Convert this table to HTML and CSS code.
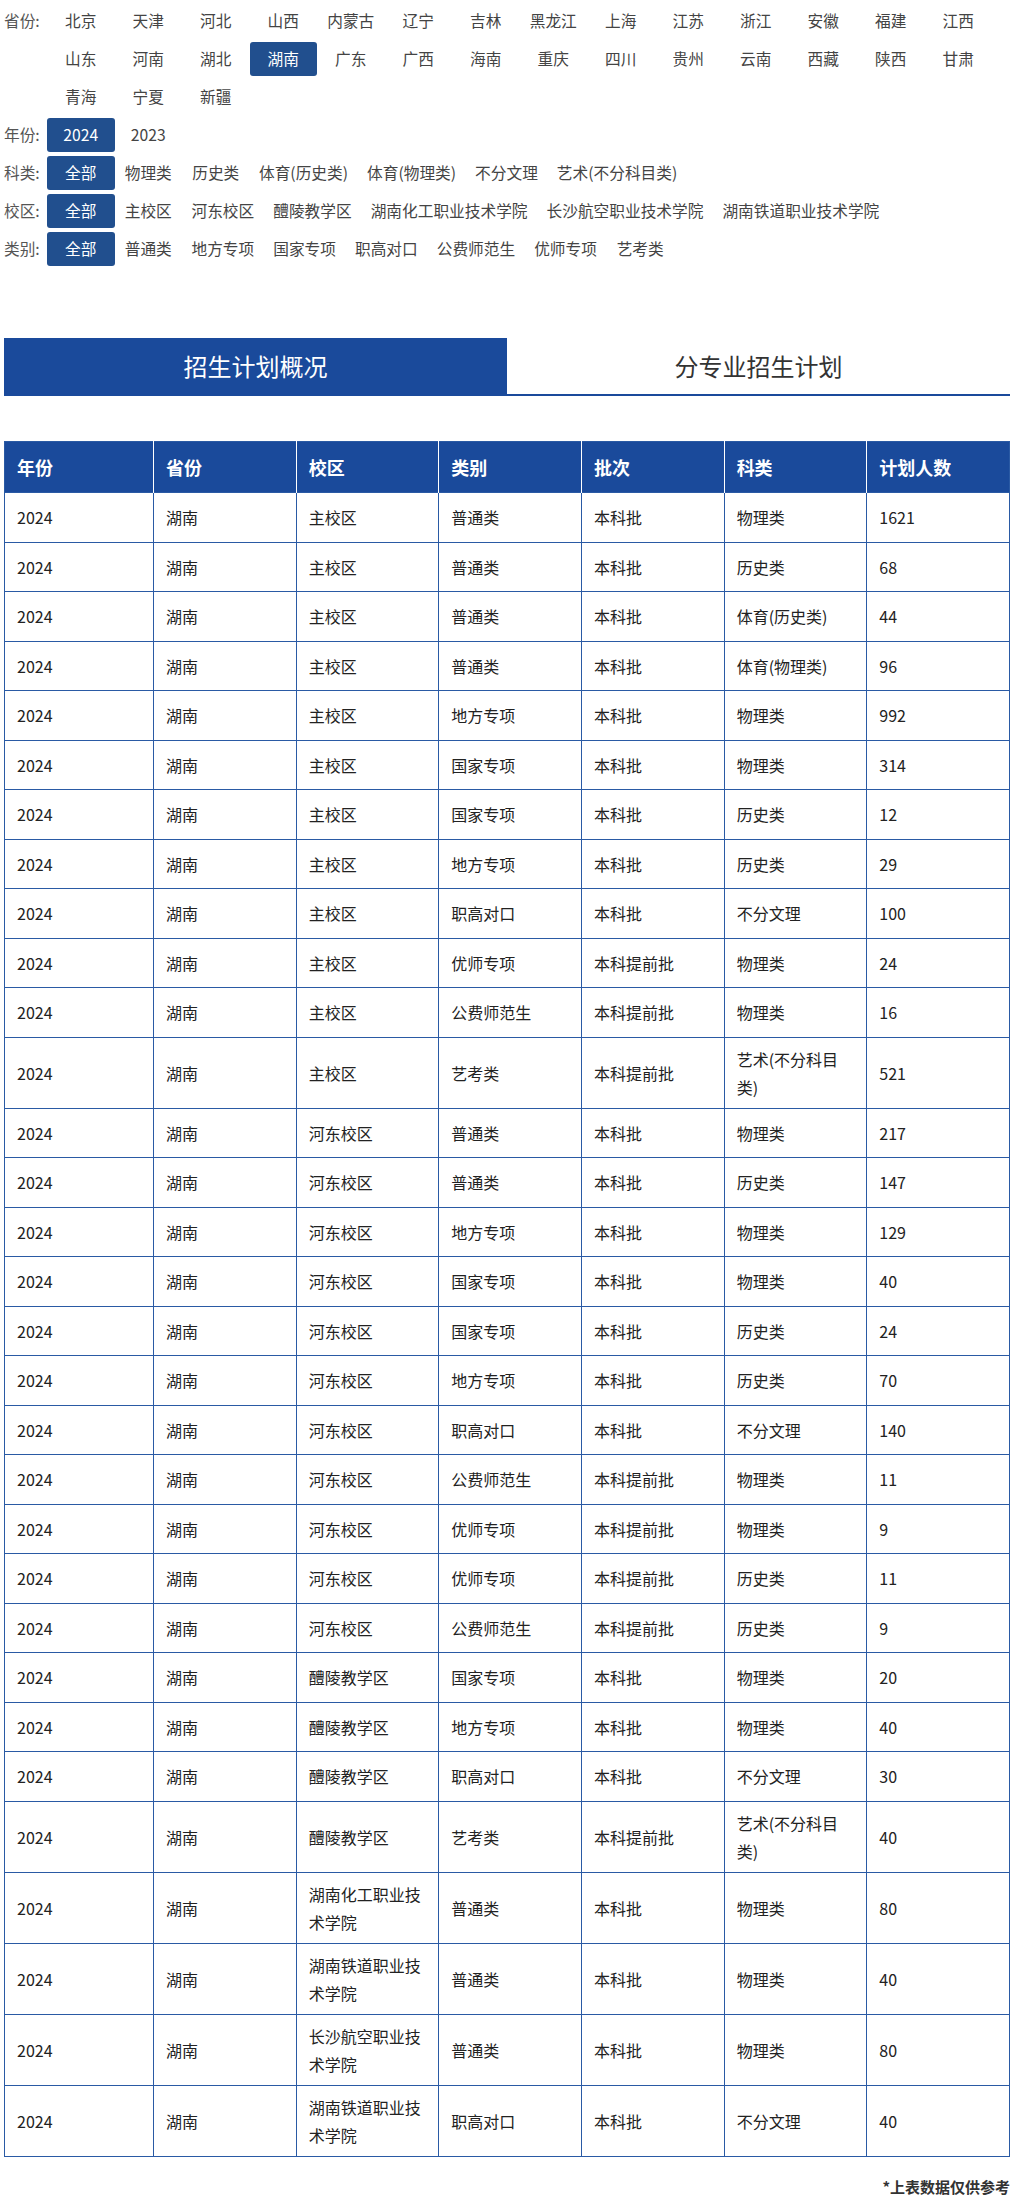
FILE: index.html
```html
<!DOCTYPE html>
<html lang="zh-CN">
<head>
<meta charset="utf-8">
<title>招生计划</title>
<link rel="stylesheet" href="styles.css">
</head>
<body>
<div class="page">
  <div class="filters">
    <div class="filter-row">
      <span class="label">省份:</span>
      <div class="items">
        <span class="item">北京</span><span class="item">天津</span><span class="item">河北</span><span class="item">山西</span><span class="item">内蒙古</span><span class="item">辽宁</span><span class="item">吉林</span><span class="item">黑龙江</span><span class="item">上海</span><span class="item">江苏</span><span class="item">浙江</span><span class="item">安徽</span><span class="item">福建</span><span class="item">江西</span>
        <span class="item">山东</span><span class="item">河南</span><span class="item">湖北</span><span class="item active">湖南</span><span class="item">广东</span><span class="item">广西</span><span class="item">海南</span><span class="item">重庆</span><span class="item">四川</span><span class="item">贵州</span><span class="item">云南</span><span class="item">西藏</span><span class="item">陕西</span><span class="item">甘肃</span>
        <span class="item">青海</span><span class="item">宁夏</span><span class="item">新疆</span>
      </div>
    </div>
    <div class="filter-row">
      <span class="label">年份:</span>
      <div class="items"><span class="item active">2024</span><span class="item">2023</span></div>
    </div>
    <div class="filter-row">
      <span class="label">科类:</span>
      <div class="items"><span class="item active">全部</span><span class="item">物理类</span><span class="item">历史类</span><span class="item">体育(历史类)</span><span class="item">体育(物理类)</span><span class="item">不分文理</span><span class="item">艺术(不分科目类)</span></div>
    </div>
    <div class="filter-row">
      <span class="label">校区:</span>
      <div class="items"><span class="item active">全部</span><span class="item">主校区</span><span class="item">河东校区</span><span class="item">醴陵教学区</span><span class="item">湖南化工职业技术学院</span><span class="item">长沙航空职业技术学院</span><span class="item">湖南铁道职业技术学院</span></div>
    </div>
    <div class="filter-row">
      <span class="label">类别:</span>
      <div class="items"><span class="item active">全部</span><span class="item">普通类</span><span class="item">地方专项</span><span class="item">国家专项</span><span class="item">职高对口</span><span class="item">公费师范生</span><span class="item">优师专项</span><span class="item">艺考类</span></div>
    </div>
  </div>

  <div class="tabs">
    <div class="tab tab-active">招生计划概况</div>
    <div class="tab">分专业招生计划</div>
  </div>

  <table class="plan">
    <colgroup><col class="c-first"><col><col><col><col><col><col></colgroup>
    <thead>
      <tr><th>年份</th><th>省份</th><th>校区</th><th>类别</th><th>批次</th><th>科类</th><th>计划人数</th></tr>
    </thead>
    <tbody>
      <tr><td>2024</td><td>湖南</td><td>主校区</td><td>普通类</td><td>本科批</td><td>物理类</td><td>1621</td></tr>
      <tr><td>2024</td><td>湖南</td><td>主校区</td><td>普通类</td><td>本科批</td><td>历史类</td><td>68</td></tr>
      <tr><td>2024</td><td>湖南</td><td>主校区</td><td>普通类</td><td>本科批</td><td>体育(历史类)</td><td>44</td></tr>
      <tr><td>2024</td><td>湖南</td><td>主校区</td><td>普通类</td><td>本科批</td><td>体育(物理类)</td><td>96</td></tr>
      <tr><td>2024</td><td>湖南</td><td>主校区</td><td>地方专项</td><td>本科批</td><td>物理类</td><td>992</td></tr>
      <tr><td>2024</td><td>湖南</td><td>主校区</td><td>国家专项</td><td>本科批</td><td>物理类</td><td>314</td></tr>
      <tr><td>2024</td><td>湖南</td><td>主校区</td><td>国家专项</td><td>本科批</td><td>历史类</td><td>12</td></tr>
      <tr><td>2024</td><td>湖南</td><td>主校区</td><td>地方专项</td><td>本科批</td><td>历史类</td><td>29</td></tr>
      <tr><td>2024</td><td>湖南</td><td>主校区</td><td>职高对口</td><td>本科批</td><td>不分文理</td><td>100</td></tr>
      <tr><td>2024</td><td>湖南</td><td>主校区</td><td>优师专项</td><td>本科提前批</td><td>物理类</td><td>24</td></tr>
      <tr><td>2024</td><td>湖南</td><td>主校区</td><td>公费师范生</td><td>本科提前批</td><td>物理类</td><td>16</td></tr>
      <tr><td>2024</td><td>湖南</td><td>主校区</td><td>艺考类</td><td>本科提前批</td><td>艺术(不分科目类)</td><td>521</td></tr>
      <tr><td>2024</td><td>湖南</td><td>河东校区</td><td>普通类</td><td>本科批</td><td>物理类</td><td>217</td></tr>
      <tr><td>2024</td><td>湖南</td><td>河东校区</td><td>普通类</td><td>本科批</td><td>历史类</td><td>147</td></tr>
      <tr><td>2024</td><td>湖南</td><td>河东校区</td><td>地方专项</td><td>本科批</td><td>物理类</td><td>129</td></tr>
      <tr><td>2024</td><td>湖南</td><td>河东校区</td><td>国家专项</td><td>本科批</td><td>物理类</td><td>40</td></tr>
      <tr><td>2024</td><td>湖南</td><td>河东校区</td><td>国家专项</td><td>本科批</td><td>历史类</td><td>24</td></tr>
      <tr><td>2024</td><td>湖南</td><td>河东校区</td><td>地方专项</td><td>本科批</td><td>历史类</td><td>70</td></tr>
      <tr><td>2024</td><td>湖南</td><td>河东校区</td><td>职高对口</td><td>本科批</td><td>不分文理</td><td>140</td></tr>
      <tr><td>2024</td><td>湖南</td><td>河东校区</td><td>公费师范生</td><td>本科提前批</td><td>物理类</td><td>11</td></tr>
      <tr><td>2024</td><td>湖南</td><td>河东校区</td><td>优师专项</td><td>本科提前批</td><td>物理类</td><td>9</td></tr>
      <tr><td>2024</td><td>湖南</td><td>河东校区</td><td>优师专项</td><td>本科提前批</td><td>历史类</td><td>11</td></tr>
      <tr><td>2024</td><td>湖南</td><td>河东校区</td><td>公费师范生</td><td>本科提前批</td><td>历史类</td><td>9</td></tr>
      <tr><td>2024</td><td>湖南</td><td>醴陵教学区</td><td>国家专项</td><td>本科批</td><td>物理类</td><td>20</td></tr>
      <tr><td>2024</td><td>湖南</td><td>醴陵教学区</td><td>地方专项</td><td>本科批</td><td>物理类</td><td>40</td></tr>
      <tr><td>2024</td><td>湖南</td><td>醴陵教学区</td><td>职高对口</td><td>本科批</td><td>不分文理</td><td>30</td></tr>
      <tr><td>2024</td><td>湖南</td><td>醴陵教学区</td><td>艺考类</td><td>本科提前批</td><td>艺术(不分科目类)</td><td>40</td></tr>
      <tr><td>2024</td><td>湖南</td><td>湖南化工职业技术学院</td><td>普通类</td><td>本科批</td><td>物理类</td><td>80</td></tr>
      <tr><td>2024</td><td>湖南</td><td>湖南铁道职业技术学院</td><td>普通类</td><td>本科批</td><td>物理类</td><td>40</td></tr>
      <tr><td>2024</td><td>湖南</td><td>长沙航空职业技术学院</td><td>普通类</td><td>本科批</td><td>物理类</td><td>80</td></tr>
      <tr><td>2024</td><td>湖南</td><td>湖南铁道职业技术学院</td><td>职高对口</td><td>本科批</td><td>不分文理</td><td>40</td></tr>
    </tbody>
  </table>

  <p class="note">*上表数据仅供参考</p>
</div>
</body>
</html>
```

FILE: styles.css
```css
* { box-sizing: border-box; }
html, body { margin: 0; padding: 0; background: #fff; }
body {
  font-family: "Noto Sans CJK SC", "Noto Sans", sans-serif;
  font-size: 16px;
  color: #333;
}
.page {
  width: 1006px;
  margin-left: 4px;
}
.filters { padding-top: 2px; }
.filter-row {
  display: flex;
  align-items: flex-start;
}
.label {
  flex: 0 0 43px;
  height: 34px;
  margin: 2px 0;
  line-height: 34px;
  font-size: 15.7px;
  color: #555;
  white-space: nowrap;
}
.items {
  display: flex;
  flex-wrap: wrap;
  flex: 1;
}
.item {
  min-width: 67.5px;
  height: 34px;
  margin: 2px 0;
  padding: 0 9.5px;
  line-height: 34px;
  font-size: 15.7px;
  text-align: center;
  color: #444;
  white-space: nowrap;
  border-radius: 3px;
}
.item.active {
  background: #214f8e;
  color: #fff;
}
.tabs {
  display: flex;
  margin-top: 70px;
  height: 58px;
}
.tab {
  flex: 1;
  text-align: center;
  font-size: 24px;
  line-height: 56px;
  color: #333;
  border-bottom: 2px solid #1a4a9b;
}
.tab-active {
  background: #1a4a9b;
  color: #fff;
}
.plan {
  margin-top: 45px;
  width: 1006px;
  table-layout: fixed;
  border-collapse: collapse;
  border: 1px solid #2a5aa4;
}
.c-first { width: 149px; }
.plan th {
  background: #1a4a9b;
  color: #fff;
  font-size: 18px;
  font-weight: bold;
  text-align: left;
  height: 51px;
  padding: 0 12px;
  border-left: 1px solid #fff;
  border-right: 1px solid #fff;
}
.plan th:first-child { border-left: 1px solid #2a5aa4; }
.plan th:last-child { border-right: 1px solid #2a5aa4; }
.plan td {
  height: 49.5px;
  padding: 7px 12px;
  line-height: 28px;
  text-align: left;
  vertical-align: middle;
  color: #222;
  border: 1px solid #2a5aa4;
}
.note {
  margin: 20px 0 0;
  text-align: right;
  font-size: 15px;
  font-weight: bold;
  line-height: 20px;
  color: #333;
}
```
